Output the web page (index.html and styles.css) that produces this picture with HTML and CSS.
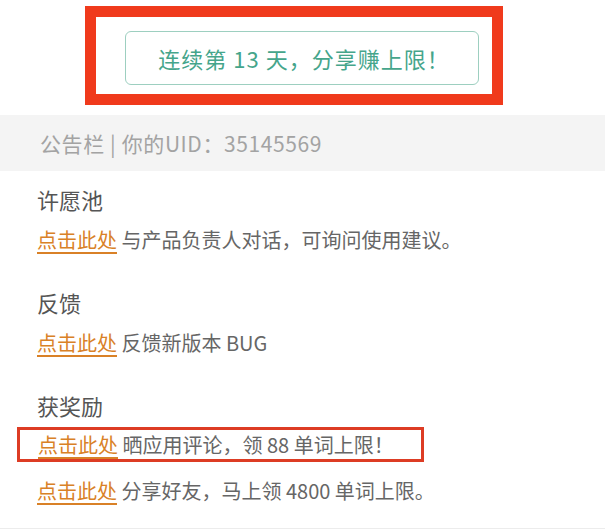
FILE: index.html
```html
<!DOCTYPE html>
<html lang="zh-CN">
<head>
    <meta charset="UTF-8">
    <meta name="viewport" content="width=device-width, initial-scale=1.0">
    <link rel="stylesheet" href="styles.css">
    <title>公告栏</title>
</head>
<body>
    <div class="top">
        <div class="mark-box">
            <div class="streak-button">连续第 13 天，分享赚上限！</div>
        </div>
    </div>

    <div class="notice-bar">公告栏 | 你的UID：35145569</div>

    <div class="section first">
        <h2>许愿池</h2>
        <p class="row"><a href="#">点击此处</a> 与产品负责人对话，可询问使用建议。</p>
    </div>

    <div class="section">
        <h2>反馈</h2>
        <p class="row"><a href="#">点击此处</a> 反馈新版本 BUG</p>
    </div>

    <div class="section">
        <h2>获奖励</h2>
        <p class="row marked"><a href="#">点击此处</a> 晒应用评论，领 88 单词上限！</p>
        <p class="row last"><a href="#">点击此处</a> 分享好友，马上领 4800 单词上限。</p>
    </div>
</body>
</html>
```

FILE: styles.css
```css
body {
    margin: 0;
    padding: 0;
    width: 605px;
    background-color: #fff;
    font-family: "Noto Sans CJK SC", "Noto Sans", sans-serif;
}

.top {
    padding-top: 6px;
    height: 115px;
    box-sizing: border-box;
}

.mark-box {
    width: 418px;
    margin-left: 85px;
    border: 11px solid #f03a1c;
    box-sizing: border-box;
    padding: 14px 13px 9px 29px;
}

.streak-button {
    height: 54px;
    border: 1px solid #9dcfc0;
    border-radius: 6px;
    box-sizing: border-box;
    display: flex;
    align-items: center;
    justify-content: center;
    color: #45a58b;
    font-size: 22px;
    letter-spacing: 1px;
    padding-left: 4px;
}

.notice-bar {
    height: 56px;
    background-color: #f4f4f4;
    color: #a3a3a3;
    font-size: 21px;
    letter-spacing: 0.6px;
    line-height: 56px;
    padding-left: 40px;
}

.section {
    padding-left: 37px;
    margin-top: 30px;
}

.section.first {
    margin-top: 12px;
}

h2 {
    margin: 0;
    font-size: 22px;
    font-weight: normal;
    line-height: 32px;
    color: #555;
}

.row {
    margin: 9px 0 0;
    font-size: 20px;
    line-height: 32px;
    color: #666;
}

.row a {
    color: #d98127;
    text-decoration: underline;
    text-decoration-thickness: 2px;
    text-underline-offset: 4px;
}

.row.marked {
    width: 407px;
    margin-left: -20px;
    margin-top: 6px;
    padding-left: 18px;
    border: 3px solid #dd3c24;
    box-sizing: border-box;
    line-height: 29px;
}

.row.last {
    margin-top: 13px;
    padding-bottom: 21px;
    margin-left: -37px;
    padding-left: 37px;
    border-bottom: 1px solid #ececec;
}
```
